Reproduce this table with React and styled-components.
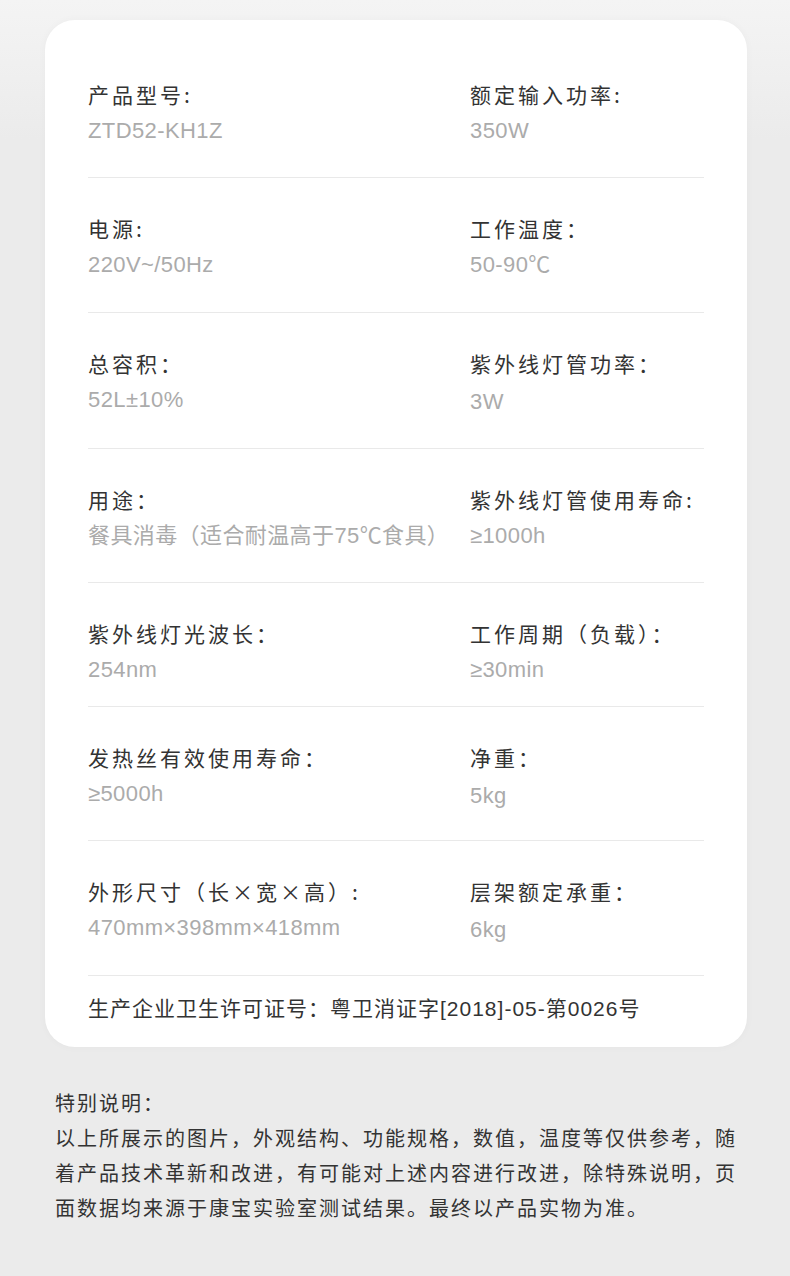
import React from 'react';
import styled, { createGlobalStyle } from 'styled-components';

const GlobalStyle = createGlobalStyle`
  html, body {
    margin: 0;
    padding: 0;
    background: #ebebeb;
  }
  body {
    font-family: "Liberation Sans", "Noto Sans CJK SC", sans-serif;
  }
`;

const Page = styled.div`
  min-height: 1276px;
  box-sizing: border-box;
  padding: 20px 43px 40px 45px;
  background: linear-gradient(#f4f4f4 0, #ebebeb 140px);
`;

const Card = styled.div`
  background: #fff;
  border-radius: 30px;
  padding: 25px 43px 23px;
  box-shadow: 0 0 8px rgba(0, 0, 0, 0.03);
`;

const Row = styled.div`
  display: grid;
  grid-template-columns: 382px 1fr;
  padding: 35px 0 ${p => p.$bottom || 31}px;
  border-bottom: 1px solid #e9e9e9;
  &:first-child {
    padding-top: 34px;
  }
`;

const Cell = styled.div`
  display: flex;
  flex-direction: column;
  gap: 7px;
`;

const Label = styled.div`
  font-family: "Noto Sans CJK SC", "Liberation Sans", sans-serif;
  font-size: 21px;
  line-height: 30px;
  letter-spacing: 3px;
  color: #333;
`;

const Value = styled.div`
  font-family: "Liberation Sans", "Noto Sans CJK SC", sans-serif;
  font-size: 22px;
  line-height: 30px;
  letter-spacing: 0.4px;
  color: #ababab;
  margin-top: ${p => p.$shift || 0}px;
`;

const License = styled.div`
  padding-top: 18px;
  font-family: "Liberation Sans", "Noto Sans CJK SC", sans-serif;
  font-size: 21px;
  line-height: 30px;
  letter-spacing: 1px;
  color: #333;
`;

const Notes = styled.div`
  width: 690px;
  margin: 38px 0 0 10px;
  font-family: "Noto Sans CJK SC", "Liberation Sans", sans-serif;
  font-size: 20px;
  line-height: 35px;
  letter-spacing: 2px;
  color: #333;
`;

const specs = [
  [['产品型号:', 'ZTD52-KH1Z'], ['额定输入功率:', '350W']],
  [['电源:', '220V~/50Hz'], ['工作温度：', '50-90℃']],
  [['总容积：', '52L±10%'], ['紫外线灯管功率：', '3W', 2]],
  [['用途：', '餐具消毒（适合耐温高于75℃食具）'], ['紫外线灯管使用寿命:', '≥1000h']],
  [['紫外线灯光波长：', '254nm'], ['工作周期（负载）：', '≥30min']],
  [['发热丝有效使用寿命：', '≥5000h'], ['净重：', '5kg', 2]],
  [['外形尺寸（长×宽×高）:', '470mm×398mm×418mm'], ['层架额定承重：', '6kg', 2]],
];

// ref rows aren't evenly spaced; per-row bottom padding
const bottoms = [31, 32, 31, 31, 21, 29, 30];

const App = () => (
  <Page>
    <GlobalStyle />
    <Card>
      {specs.map((row, i) => (
        <Row key={i} $bottom={bottoms[i]}>
          {row.map(([label, value, shift]) => (
            <Cell key={label}>
              <Label>{label}</Label>
              <Value $shift={shift}>{value}</Value>
            </Cell>
          ))}
        </Row>
      ))}
      <License>生产企业卫生许可证号：粤卫消证字[2018]-05-第0026号</License>
    </Card>
    <Notes>
      特别说明：
      <br />
      以上所展示的图片，外观结构、功能规格，数值，温度等仅供参考，随着产品技术革新和改进，有可能对上述内容进行改进，除特殊说明，页面数据均来源于康宝实验室测试结果。最终以产品实物为准。
    </Notes>
  </Page>
);

export default App;
